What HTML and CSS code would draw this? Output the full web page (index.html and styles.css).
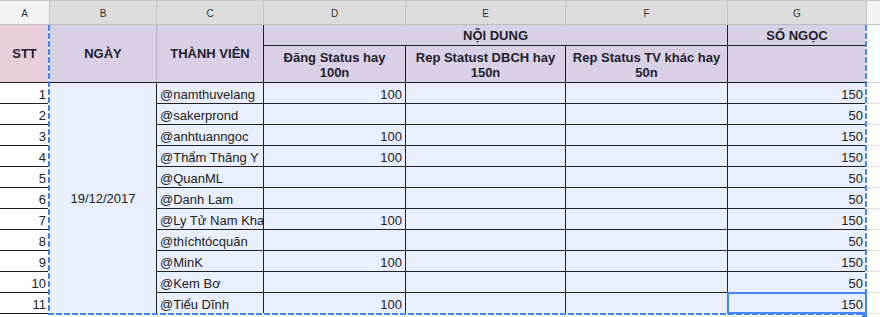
FILE: index.html
```html
<!DOCTYPE html>
<html lang="vi">
<head>
<meta charset="utf-8">
<title>Sheet</title>
<link rel="stylesheet" href="styles.css">
</head>
<body>
<div class="sheet">
  <div class="grid">
    <div class="ch ch-a">A</div>
    <div class="ch ch-sel">B</div>
    <div class="ch ch-sel">C</div>
    <div class="ch ch-sel">D</div>
    <div class="ch ch-sel">E</div>
    <div class="ch ch-sel">F</div>
    <div class="ch ch-sel">G</div>
    <div class="ch ch-h"></div>

    <div class="hd hd-stt span-r2">STT</div>
    <div class="hd hd-b span-r2">NGÀY</div>
    <div class="hd hd-c span-r2">THÀNH VIÊN</div>
    <div class="hd hd-group">NỘI DUNG</div>
    <div class="hd hd-g1">SỐ NGỌC</div>
    <div class="blank span-r2 blank-head"></div>
    <div class="hd hd-sub">Đăng Status hay<br>100n</div>
    <div class="hd hd-sub">Rep Statust DBCH hay<br>150n</div>
    <div class="hd hd-sub">Rep Status TV khác hay<br>50n</div>
    <div class="hd hd-g2"></div>

    <div class="c num stt">1</div>
    <div class="c date">19/12/2017</div>
    <div class="c txt">@namthuvelang</div>
    <div class="c num">100</div><div class="c"></div><div class="c"></div><div class="c num">150</div>
    <div class="blank"></div>

    <div class="c num stt">2</div>
    <div class="c txt">@sakerprond</div>
    <div class="c num"></div><div class="c"></div><div class="c"></div><div class="c num">50</div>
    <div class="blank"></div>

    <div class="c num stt">3</div>
    <div class="c txt">@anhtuanngoc</div>
    <div class="c num">100</div><div class="c"></div><div class="c"></div><div class="c num">150</div>
    <div class="blank"></div>

    <div class="c num stt">4</div>
    <div class="c txt">@Thẩm Thăng Y</div>
    <div class="c num">100</div><div class="c"></div><div class="c"></div><div class="c num">150</div>
    <div class="blank"></div>

    <div class="c num stt">5</div>
    <div class="c txt">@QuanML</div>
    <div class="c num"></div><div class="c"></div><div class="c"></div><div class="c num">50</div>
    <div class="blank"></div>

    <div class="c num stt">6</div>
    <div class="c txt">@Danh Lam</div>
    <div class="c num"></div><div class="c"></div><div class="c"></div><div class="c num">50</div>
    <div class="blank"></div>

    <div class="c num stt">7</div>
    <div class="c txt">@Ly Tử Nam Kha</div>
    <div class="c num">100</div><div class="c"></div><div class="c"></div><div class="c num">150</div>
    <div class="blank"></div>

    <div class="c num stt">8</div>
    <div class="c txt">@thíchtócquăn</div>
    <div class="c num"></div><div class="c"></div><div class="c"></div><div class="c num">50</div>
    <div class="blank"></div>

    <div class="c num stt">9</div>
    <div class="c txt">@MinK</div>
    <div class="c num">100</div><div class="c"></div><div class="c"></div><div class="c num">150</div>
    <div class="blank"></div>

    <div class="c num stt">10</div>
    <div class="c txt">@Kem Bơ</div>
    <div class="c num"></div><div class="c"></div><div class="c"></div><div class="c num">50</div>
    <div class="blank"></div>

    <div class="c num stt">11</div>
    <div class="c txt">@Tiểu Dĩnh</div>
    <div class="c num">100</div><div class="c"></div><div class="c"></div><div class="c num">150</div>
    <div class="blank"></div>
  </div>

  <div class="marquee"></div>
  <div class="active"></div>
  <div class="handle"></div>
</div>
</body>
</html>
```

FILE: styles.css
```css
html, body {
  margin: 0;
  padding: 0;
  background: #fff;
}

body {
  width: 880px;
  height: 317px;
  overflow: hidden;
  font-family: "Liberation Sans", Arial, sans-serif;
  font-size: 13px;
  color: #222;
}

.sheet {
  position: relative;
  width: 880px;
  height: 317px;
  overflow: hidden;
}

.grid {
  display: grid;
  grid-template-columns: 50px 107px 107px 142px 160px 162px 139px 1fr;
  grid-template-rows: 25px 21px 37px repeat(11, 21px);
}

.grid > div {
  box-sizing: border-box;
  overflow: hidden;
  white-space: nowrap;
}

/* column letter headers */
.ch {
  display: flex;
  align-items: center;
  justify-content: center;
  font-size: 10px;
  color: #333;
  border-top: 1px solid #c8c8c8;
  border-bottom: 1px solid #bdbdbd;
  border-right: 1px solid #c4c4c4;
  padding-top: 1px;
}
.ch-a { background: #f3f3f3; }
.ch-sel { background: #dcdcdc; }
.ch-h { background: #f3f3f3; border-right: none; }

/* header cells */
.hd {
  display: flex;
  align-items: center;
  justify-content: center;
  text-align: center;
  font-weight: bold;
  line-height: 15px;
  background: #d9d0e6;
  color: #22222c;
  border-right: 1px solid #222;
  border-bottom: 1px solid #222;
}
.span-r2 { grid-row: span 2; }
.hd-stt { background: #e9cedb; }
.hd-b { border-right-color: #b6aec2; }
.hd-group { grid-column: span 3; }
.hd-sub { padding-top: 1px; }

/* data cells */
.c {
  display: flex;
  align-items: flex-end;
  padding: 0 3px 1px;
  line-height: 15px;
  background: #e9effd;
  border-right: 1px solid #222;
  border-bottom: 1px solid #222;
}
.num { justify-content: flex-end; }
.txt { justify-content: flex-start; }
.stt { background: #fff; }
.date {
  grid-row: span 11;
  align-items: center;
  justify-content: center;
  padding: 0;
}

.blank {
  background: #fff;
  border-bottom: 1px solid #e2e2e2;
}
.blank-head { border-bottom: 1px solid #d0d0d0; }

/* copy marquee over B..G */
.marquee {
  position: absolute;
  left: 48px;
  top: 25px;
  width: 819px;
  height: 290px;
  pointer-events: none;
  background:
    repeating-linear-gradient(to bottom, #4285f4 0 6px, #ffffff 6px 8px) left top / 2px 100% no-repeat,
    repeating-linear-gradient(to bottom, #4285f4 0 6px, #ffffff 6px 8px) right top / 2px 100% no-repeat,
    repeating-linear-gradient(to right, #4285f4 0 6px, #ffffff 6px 8px) left bottom / 100% 2px no-repeat;
}

/* active cell G11 */
.active {
  position: absolute;
  left: 727px;
  top: 292px;
  width: 140px;
  height: 22px;
  box-sizing: border-box;
  border: 2px solid #4285f4;
  pointer-events: none;
}

.handle {
  position: absolute;
  left: 862px;
  top: 312px;
  width: 5px;
  height: 6px;
  background: #4285f4;
}
```
